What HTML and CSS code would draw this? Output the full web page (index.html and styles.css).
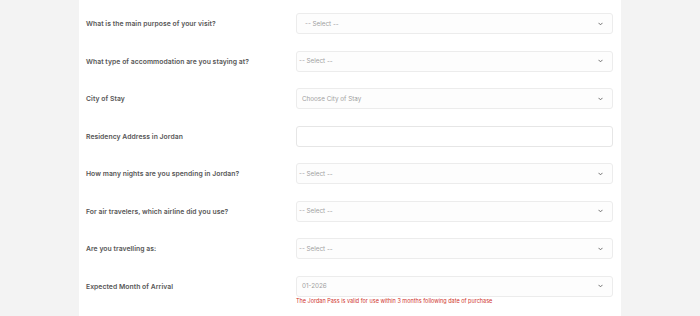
FILE: index.html
```html
<!DOCTYPE html>
<html lang="en">
<head>
<meta charset="utf-8">
<title>Visit details</title>
<link rel="stylesheet" href="styles.css">
</head>
<body>
<div class="card">
  <div class="row">
    <label class="label">What is the main purpose of your visit?</label>
    <div class="field">
      <div class="select pad-a"><span class="ph">-- Select --</span><svg class="chev" viewBox="0 0 6 4"><polyline points="0.6,0.6 3,3 5.4,0.6"/></svg></div>
    </div>
  </div>
  <div class="row">
    <label class="label">What type of accommodation are you staying at?</label>
    <div class="field">
      <div class="select pad-b"><span class="ph">-- Select --</span><svg class="chev" viewBox="0 0 6 4"><polyline points="0.6,0.6 3,3 5.4,0.6"/></svg></div>
    </div>
  </div>
  <div class="row">
    <label class="label">City of Stay</label>
    <div class="field">
      <div class="select pad-c"><span class="ph">Choose City of Stay</span><svg class="chev" viewBox="0 0 6 4"><polyline points="0.6,0.6 3,3 5.4,0.6"/></svg></div>
    </div>
  </div>
  <div class="row">
    <label class="label">Residency Address in Jordan</label>
    <div class="field">
      <div class="select input"></div>
    </div>
  </div>
  <div class="row">
    <label class="label">How many nights are you spending in Jordan?</label>
    <div class="field">
      <div class="select pad-b"><span class="ph">-- Select --</span><svg class="chev" viewBox="0 0 6 4"><polyline points="0.6,0.6 3,3 5.4,0.6"/></svg></div>
    </div>
  </div>
  <div class="row">
    <label class="label">For air travelers, which airline did you use?</label>
    <div class="field">
      <div class="select pad-b"><span class="ph">-- Select --</span><svg class="chev" viewBox="0 0 6 4"><polyline points="0.6,0.6 3,3 5.4,0.6"/></svg></div>
    </div>
  </div>
  <div class="row">
    <label class="label">Are you travelling as:</label>
    <div class="field">
      <div class="select pad-b"><span class="ph">-- Select --</span><svg class="chev" viewBox="0 0 6 4"><polyline points="0.6,0.6 3,3 5.4,0.6"/></svg></div>
    </div>
  </div>
  <div class="row last">
    <label class="label">Expected Month of Arrival</label>
    <div class="field">
      <div class="select pad-c"><span class="ph">01-2026</span><svg class="chev" viewBox="0 0 6 4"><polyline points="0.6,0.6 3,3 5.4,0.6"/></svg></div>
      <div class="note">The Jordan Pass is valid for use within 3 months following date of purchase</div>
    </div>
  </div>
</div>
</body>
</html>
```
FILE: styles.css
```css
html, body {
  margin: 0;
  padding: 0;
  background: #f3f3f3;
  height: 100%;
}
body {
  font-family: Inter, "Liberation Sans", sans-serif;
}
.card {
  width: 542px;
  margin: 0 auto;
  background: #ffffff;
  box-sizing: border-box;
  padding: 13px 8px 0 7px;
  min-height: 316px;
}
.row {
  display: grid;
  grid-template-columns: 1fr 317px;
  align-items: start;
  margin-bottom: 16.5px;
}
.label {
  font-size: 6.8px;
  font-weight: 600;
  color: #565656;
  line-height: 21px;
  letter-spacing: 0.05px;
}
.field {
  display: flex;
  flex-direction: column;
}
.select {
  height: 21px;
  box-sizing: border-box;
  border: 1px solid #ececec;
  border-radius: 3px;
  background: #fdfdfd;
  display: flex;
  align-items: center;
  justify-content: space-between;
  padding-right: 9px;
}
.input {
  background: #ffffff;
  border-color: #e6e6e6;
}
.pad-a { padding-left: 8px; }
.pad-b { padding-left: 2px; }
.pad-c { padding-left: 5px; }
.ph {
  font-size: 6.3px;
  color: #a0a0a0;
}
.chev {
  width: 5px;
  height: 4px;
  fill: none;
  stroke: #666666;
  stroke-width: 1.1;
}
.note {
  margin-top: 1px;
  font-size: 5.5px;
  color: #d0342c;
  line-height: 7px;
}
```
